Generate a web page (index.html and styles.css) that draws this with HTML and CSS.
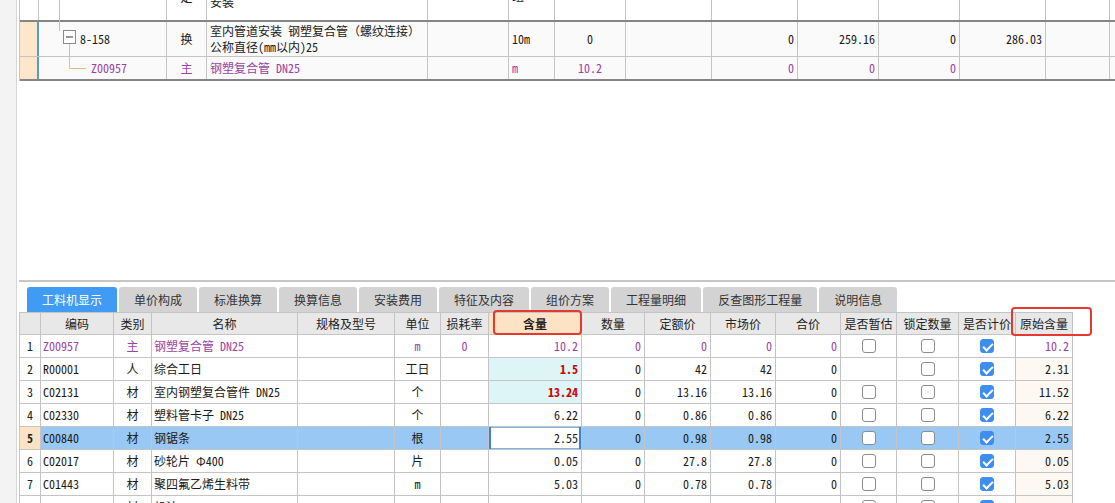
FILE: index.html
```html
<!DOCTYPE html>
<html lang="zh-CN">
<head>
<meta charset="utf-8">
<title>工料机显示</title>
<link rel="stylesheet" href="styles.css">
</head>
<body>
<div class="app">
  <div class="side"></div>
  <div class="main">
    <div class="upper">
      <div class="tgrid">
        <div class="trow r0">
          <div class="tc"></div>
          <div class="tc"></div>
          <div class="tc c clip"><span class="up10">定</span></div>
          <div class="tc pl clip"><span class="up4">安装</span></div>
          <div class="tc"></div>
          <div class="tc pl clip"><span class="up11">组</span></div>
          <div class="tc"></div>
          <div class="tc"></div>
          <div class="tc"></div>
          <div class="tc"></div>
          <div class="tc"></div>
          <div class="tc"></div>
          <div class="tc"></div>
          <div class="tc last"></div>
        </div>
        <div class="trow r1 sel">
          <div class="tc rn"></div>
          <div class="tc t1">8-158</div>
          <div class="tc c">换</div>
          <div class="tc pl two">室内管道安装 钢塑复合管（螺纹连接）<br>公称直径(mm以内)25</div>
          <div class="tc"></div>
          <div class="tc pl">10m</div>
          <div class="tc c">0</div>
          <div class="tc"></div>
          <div class="tc r">0</div>
          <div class="tc r">259.16</div>
          <div class="tc r">0</div>
          <div class="tc r">286.03</div>
          <div class="tc"></div>
          <div class="tc last"></div>
        </div>
        <div class="trow r2 sel pur">
          <div class="tc rn"></div>
          <div class="tc t2">Z00957</div>
          <div class="tc c">主</div>
          <div class="tc pl">钢塑复合管 DN25</div>
          <div class="tc"></div>
          <div class="tc pl">m</div>
          <div class="tc c">10.2</div>
          <div class="tc"></div>
          <div class="tc r">0</div>
          <div class="tc r">0</div>
          <div class="tc r">0</div>
          <div class="tc"></div>
          <div class="tc"></div>
          <div class="tc last"></div>
        </div>
      </div>
      <svg class="tree" width="80" height="81" viewBox="0 0 80 81">
        <path d="M40.5 0 V31 M50.5 43.5 V68.5 H67" fill="none" stroke="#e0bf80" stroke-width="1"/>
        <rect x="44.5" y="30.5" width="12" height="13" fill="#fff" stroke="#8a8a8a"/>
        <path d="M47 37 H54" stroke="#333" stroke-width="1"/>
      </svg>
    </div>
    <div class="sep"></div>
    <div class="lower">
      <div class="tabs">
        <div class="tab on">工料机显示</div>
        <div class="tab">单价构成</div>
        <div class="tab">标准换算</div>
        <div class="tab">换算信息</div>
        <div class="tab">安装费用</div>
        <div class="tab">特征及内容</div>
        <div class="tab">组价方案</div>
        <div class="tab">工程量明细</div>
        <div class="tab">反查图形工程量</div>
        <div class="tab">说明信息</div>
      </div>
      <div class="bgrid">
        <div class="brow head">
          <div class="bc"></div>
          <div class="bc c">编码</div>
          <div class="bc c">类别</div>
          <div class="bc c">名称</div>
          <div class="bc c">规格及型号</div>
          <div class="bc c">单位</div>
          <div class="bc c">损耗率</div>
          <div class="bc c hl">含量</div>
          <div class="bc c">数量</div>
          <div class="bc c">定额价</div>
          <div class="bc c">市场价</div>
          <div class="bc c">合价</div>
          <div class="bc c">是否暂估</div>
          <div class="bc c">锁定数量</div>
          <div class="bc c">是否计价</div>
          <div class="bc c">原始含量</div>
        </div>
        <div class="brow pur">
          <div class="bc c num">1</div>
          <div class="bc l">Z00957</div>
          <div class="bc c">主</div>
          <div class="bc l">钢塑复合管 DN25</div>
          <div class="bc"></div>
          <div class="bc c">m</div>
          <div class="bc c">0</div>
          <div class="bc r">10.2</div>
          <div class="bc r">0</div>
          <div class="bc r">0</div>
          <div class="bc r">0</div>
          <div class="bc r">0</div>
          <div class="bc c"><span class="cb"></span></div>
          <div class="bc c"><span class="cb"></span></div>
          <div class="bc c"><span class="cb on"></span></div>
          <div class="bc r">10.2</div>
        </div>
        <div class="brow">
          <div class="bc c num">2</div>
          <div class="bc l">R00001</div>
          <div class="bc c">人</div>
          <div class="bc l">综合工日</div>
          <div class="bc"></div>
          <div class="bc c">工日</div>
          <div class="bc"></div>
          <div class="bc r mod">1.5</div>
          <div class="bc r">0</div>
          <div class="bc r">42</div>
          <div class="bc r">42</div>
          <div class="bc r">0</div>
          <div class="bc c"></div>
          <div class="bc c"><span class="cb"></span></div>
          <div class="bc c"><span class="cb on"></span></div>
          <div class="bc r orig">2.31</div>
        </div>
        <div class="brow">
          <div class="bc c num">3</div>
          <div class="bc l">C02131</div>
          <div class="bc c">材</div>
          <div class="bc l">室内钢塑复合管件 DN25</div>
          <div class="bc"></div>
          <div class="bc c">个</div>
          <div class="bc"></div>
          <div class="bc r mod">13.24</div>
          <div class="bc r">0</div>
          <div class="bc r">13.16</div>
          <div class="bc r">13.16</div>
          <div class="bc r">0</div>
          <div class="bc c"><span class="cb"></span></div>
          <div class="bc c"><span class="cb"></span></div>
          <div class="bc c"><span class="cb on"></span></div>
          <div class="bc r orig">11.52</div>
        </div>
        <div class="brow">
          <div class="bc c num">4</div>
          <div class="bc l">C02330</div>
          <div class="bc c">材</div>
          <div class="bc l">塑料管卡子 DN25</div>
          <div class="bc"></div>
          <div class="bc c">个</div>
          <div class="bc"></div>
          <div class="bc r">6.22</div>
          <div class="bc r">0</div>
          <div class="bc r">0.86</div>
          <div class="bc r">0.86</div>
          <div class="bc r">0</div>
          <div class="bc c"><span class="cb"></span></div>
          <div class="bc c"><span class="cb"></span></div>
          <div class="bc c"><span class="cb on"></span></div>
          <div class="bc r orig">6.22</div>
        </div>
        <div class="brow cur">
          <div class="bc c num curnum">5</div>
          <div class="bc l">C00840</div>
          <div class="bc c">材</div>
          <div class="bc l">钢锯条</div>
          <div class="bc"></div>
          <div class="bc c">根</div>
          <div class="bc"></div>
          <div class="bc r edit">2.55</div>
          <div class="bc r">0</div>
          <div class="bc r">0.98</div>
          <div class="bc r">0.98</div>
          <div class="bc r">0</div>
          <div class="bc c"><span class="cb"></span></div>
          <div class="bc c"><span class="cb"></span></div>
          <div class="bc c"><span class="cb on"></span></div>
          <div class="bc r">2.55</div>
        </div>
        <div class="brow">
          <div class="bc c num">6</div>
          <div class="bc l">C02017</div>
          <div class="bc c">材</div>
          <div class="bc l">砂轮片 Φ400</div>
          <div class="bc"></div>
          <div class="bc c">片</div>
          <div class="bc"></div>
          <div class="bc r">0.05</div>
          <div class="bc r">0</div>
          <div class="bc r">27.8</div>
          <div class="bc r">27.8</div>
          <div class="bc r">0</div>
          <div class="bc c"><span class="cb"></span></div>
          <div class="bc c"><span class="cb"></span></div>
          <div class="bc c"><span class="cb on"></span></div>
          <div class="bc r orig">0.05</div>
        </div>
        <div class="brow">
          <div class="bc c num">7</div>
          <div class="bc l">C01443</div>
          <div class="bc c">材</div>
          <div class="bc l">聚四氟乙烯生料带</div>
          <div class="bc"></div>
          <div class="bc c">m</div>
          <div class="bc"></div>
          <div class="bc r">5.03</div>
          <div class="bc r">0</div>
          <div class="bc r">0.78</div>
          <div class="bc r">0.78</div>
          <div class="bc r">0</div>
          <div class="bc c"><span class="cb"></span></div>
          <div class="bc c"><span class="cb"></span></div>
          <div class="bc c"><span class="cb on"></span></div>
          <div class="bc r orig">5.03</div>
        </div>
        <div class="brow">
          <div class="bc c num">8</div>
          <div class="bc l"></div>
          <div class="bc c">材</div>
          <div class="bc l">机油</div>
          <div class="bc"></div>
          <div class="bc c"></div>
          <div class="bc"></div>
          <div class="bc r"></div>
          <div class="bc r"></div>
          <div class="bc r"></div>
          <div class="bc r"></div>
          <div class="bc r"></div>
          <div class="bc c"><span class="cb"></span></div>
          <div class="bc c"><span class="cb"></span></div>
          <div class="bc c"><span class="cb on"></span></div>
          <div class="bc r orig"></div>
        </div>
      </div>
      <div class="mark m1"></div>
      <div class="mark m2"></div>
    </div>
  </div>
</div>
</body>
</html>
```

FILE: styles.css
```css
* { box-sizing: border-box; }

html, body {
  margin: 0;
  padding: 0;
  background: #ffffff;
}

body {
  font-family: "Noto Sans Mono CJK SC", "Noto Sans CJK SC", sans-serif;
  font-size: 12px;
  line-height: 14px;
  color: #1a1a1a;
  overflow: hidden;
  width: 1115px;
  height: 503px;
}

.app {
  display: flex;
  height: 503px;
}

.side {
  flex: none;
  width: 17px;
  background: #f3f3f3;
  border-right: 1px solid #d6d6d6;
}

.main {
  flex: 1;
  min-width: 0;
  padding-left: 2px;
  display: flex;
  flex-direction: column;
}

/* ---------- upper tree grid ---------- */
.upper {
  position: relative;
  height: 280px;
  flex: none;
}

.tgrid {
  border-left: 1px solid #c4c4c4;
}

.trow {
  display: grid;
  grid-template-columns: 19px 128px 40px 221px 81px 46px 71px 86px 86px 81px 81px 86px 64px 1fr;
}

.tc {
  border-right: 1px solid #c4c4c4;
  display: flex;
  align-items: center;
  white-space: nowrap;
  overflow: hidden;
}

.tc.last { border-right: none; }

.r0 {
  height: 22px;
  border-bottom: 2px solid #858585;
}

.r1 {
  height: 35px;
  border-bottom: 1px solid #c4c4c4;
}

.r2 {
  height: 24px;
  border-bottom: 2px solid #858585;
}

.sel .tc { background: #fafafa; }
.sel .tc.rn {
  background: #fde6c9;
  border-right: 2px solid #5a97d6;
}

.pur { color: #9b44a3; }

.tc.c { justify-content: center; }
.tc.r { justify-content: flex-end; padding-right: 3px; }
.tc.pl { padding-left: 3px; }
.tc.t1 { padding-left: 41px; }
.tc.t2 { padding-left: 52px; }
.tc.two { line-height: 16px; }

.tc.clip { align-items: flex-start; }
.up4 { margin-top: -5px; }
.up10 { margin-top: -10px; }
.up11 { margin-top: -11px; }

.tree {
  position: absolute;
  left: 0;
  top: 0;
}

/* ---------- separator ---------- */
.sep {
  flex: none;
  height: 2px;
  background: #c6c6c6;
  margin-bottom: 5px;
}

/* ---------- lower ---------- */
.lower {
  position: relative;
  flex: 1;
  min-height: 0;
}

.tabs {
  display: flex;
  gap: 2px;
  padding-left: 8px;
  height: 25px;
  align-items: stretch;
}

.tab {
  padding: 0 15px;
  background: #d3d3d3;
  color: #333333;
  border-radius: 3px 3px 0 0;
  display: flex;
  align-items: center;
  justify-content: center;
  white-space: nowrap;
}

.tab.on {
  background: #3f9bf4;
  color: #ffffff;
}

.bgrid {
  border-left: 1px solid #c4c4c4;
  width: max-content;
}

.brow {
  display: grid;
  grid-template-columns: 21px 73px 38px 146px 97px 46px 48px 93px 63px 66px 65px 65px 56px 62px 57px 57px;
  height: 23px;
}

.bc {
  border-right: 1px solid #c4c4c4;
  border-bottom: 1px solid #c4c4c4;
  display: flex;
  align-items: center;
  white-space: nowrap;
  overflow: hidden;
  background: #ffffff;
}

.bc.c { justify-content: center; }
.bc.l { padding-left: 2px; }
.bc.r { justify-content: flex-end; padding-right: 3px; }

.head .bc {
  background: #e8e8e8;
  border-top: 1px solid #c4c4c4;
  color: #222222;
}

.head .bc.hl {
  background: #fde3c4;
  font-weight: bold;
}

.num { color: #222222; }

.bc.mod {
  background: #ddf5f7;
  color: #d40000;
  font-weight: bold;
}

.bc.orig { background: #fdf8f2; }

.cur .bc { background: #98c8f3; }
.cur .bc.curnum {
  background: #fde3c3;
  font-weight: bold;
}
.cur .bc.edit {
  background: #ffffff;
  box-shadow: inset 2px 0 0 #3d82d6, inset -2px 0 0 #3d82d6, inset 0 1px 0 #7fb0e6, inset 0 -1px 0 #7fb0e6;
}

.cb {
  display: inline-block;
  position: relative;
  width: 14px;
  height: 14px;
  border: 1px solid #8c8c8c;
  border-radius: 3px;
  background: #ffffff;
}

.cb.on {
  background: #3d8eee;
  border-color: #3d8eee;
}

.cb.on::after {
  content: "";
  position: absolute;
  left: 4px;
  top: 1px;
  width: 4px;
  height: 8px;
  border: solid #ffffff;
  border-width: 0 2px 2px 0;
  transform: rotate(45deg);
}

/* red highlight marks (overlays) */
.mark {
  position: absolute;
  border: 2px solid #e5392f;
  border-radius: 4px;
  pointer-events: none;
}

.m1 {
  left: 474px;
  top: 23px;
  width: 89px;
  height: 25px;
}

.m2 {
  left: 992px;
  top: 20px;
  width: 81px;
  height: 29px;
}
```
